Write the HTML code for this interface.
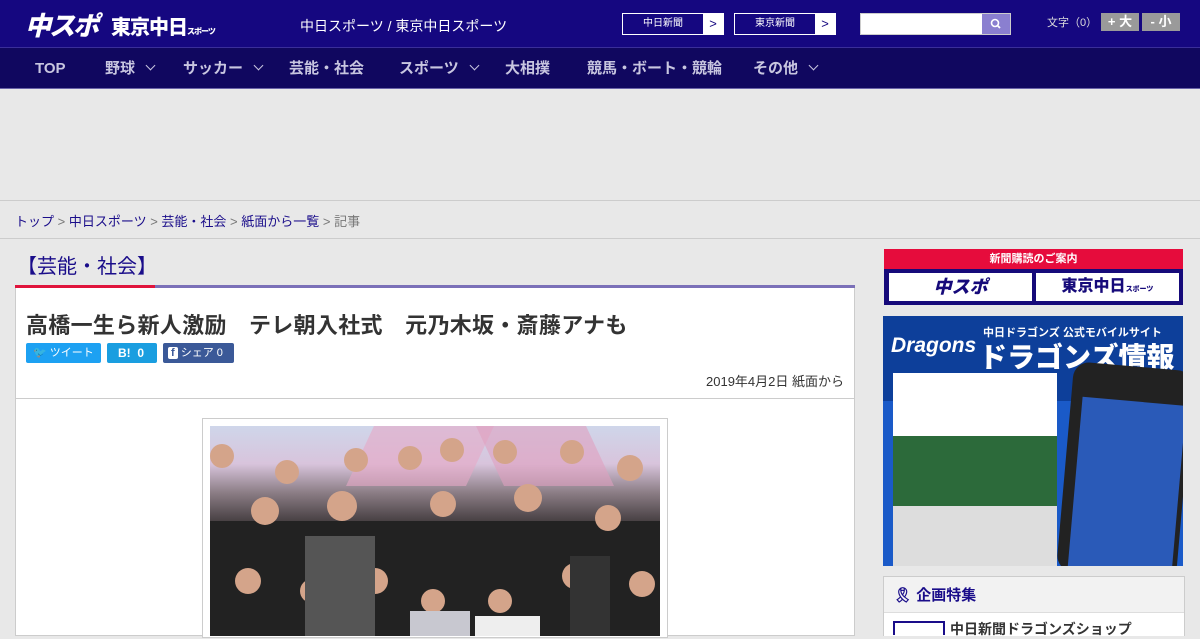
<!DOCTYPE html>
<html><head><meta charset="utf-8"><style>
*{margin:0;padding:0;box-sizing:border-box}
body{width:1200px;height:630px;overflow:hidden;background:#e8e8e8;font-family:"Liberation Sans","Noto Sans CJK JP",sans-serif;position:relative}
.a{position:absolute}
#hd{left:0;top:0;width:1200px;height:48px;background:#150780;border-bottom:1px solid #3a2e9a}
#nav{left:0;top:48px;width:1200px;height:41px;background:#10075f;border-bottom:1px solid #6a63a8}
.nv{top:58px;height:22px;line-height:22px;color:#c8c6e0;font-size:15px;font-weight:bold;white-space:nowrap}
.chev{display:inline-block;width:7px;height:7px;border-right:1.5px solid #c8c6e0;border-bottom:1.5px solid #c8c6e0;transform:rotate(45deg);margin-left:12px;vertical-align:4px}
.hb{top:13px;height:22px;border:1px solid #fff;background:#150780;color:#fff;font-size:10px;line-height:20px}
.hb span{position:absolute;right:0;top:0;width:20px;height:20px;background:#fff;color:#150780;text-align:center;font-size:13px}
</style></head><body>
<div id="hd" class="a"></div>
<div class="a" style="left:25px;top:6px;color:#fff;font-size:26px;font-weight:900;font-style:italic;letter-spacing:-2px">中スポ</div>
<div class="a" style="left:111px;top:11px;color:#fff;font-size:20px;font-weight:900;letter-spacing:-1px">東京中日<span style="font-size:8px">スポーツ</span></div>
<div class="a" style="left:300px;top:16px;color:#fff;font-size:14px">中日スポーツ / 東京中日スポーツ</div>
<div class="a hb" style="left:622px;width:102px;padding-left:20px">中日新聞<span>&gt;</span></div>
<div class="a hb" style="left:734px;width:102px;padding-left:20px">東京新聞<span>&gt;</span></div>
<div class="a" style="left:860px;top:13px;width:151px;height:22px;background:#fff;border:1px solid #ccc"></div>
<div class="a" style="left:982px;top:14px;width:28px;height:20px;background:#8a7fd0"><svg width="28" height="20"><circle cx="13" cy="9" r="3.5" stroke="#fff" stroke-width="1.6" fill="none"/><line x1="15.5" y1="11.5" x2="18" y2="14" stroke="#fff" stroke-width="1.8"/></svg></div>
<div class="a" style="left:1047px;top:14px;color:#ddd;font-size:11px">文字（0）</div>
<div class="a" style="left:1101px;top:13px;width:38px;height:18px;background:#9a9a9a;color:#fff;font-size:13px;font-weight:bold;text-align:center;line-height:18px">+ 大</div>
<div class="a" style="left:1142px;top:13px;width:38px;height:18px;background:#9a9a9a;color:#fff;font-size:13px;font-weight:bold;text-align:center;line-height:18px">- 小</div>
<div id="nav" class="a"></div>
<div class="a nv" style="left:35px">TOP</div>
<div class="a nv" style="left:105px">野球<i class="chev"></i></div>
<div class="a nv" style="left:183px">サッカー<i class="chev"></i></div>
<div class="a nv" style="left:289px">芸能・社会</div>
<div class="a nv" style="left:399px">スポーツ<i class="chev"></i></div>
<div class="a nv" style="left:505px">大相撲</div>
<div class="a nv" style="left:587px">競馬・ボート・競輪</div>
<div class="a nv" style="left:753px">その他<i class="chev"></i></div>
<div class="a" style="left:0;top:200px;width:1200px;height:39px;border-top:1px solid #ccc;border-bottom:1px solid #ccc"></div>
<div class="a" style="left:15px;top:211px;font-size:13px;color:#777"><span style="color:#1a0d8a">トップ</span> &gt; <span style="color:#1a0d8a">中日スポーツ</span> &gt; <span style="color:#1a0d8a">芸能・社会</span> &gt; <span style="color:#1a0d8a">紙面から一覧</span> &gt; 記事</div>
<div class="a" style="left:17px;top:250px;font-size:20px;color:#1a0d8a">【芸能・社会】</div>
<div class="a" style="left:15px;top:286px;width:840px;height:350px;background:#fff;border:1px solid #ccc;border-top:none"></div>
<div class="a" style="left:15px;top:285px;width:140px;height:3px;background:#e0143c"></div>
<div class="a" style="left:155px;top:285px;width:700px;height:3px;background:#7b70b8"></div>
<div class="a" style="left:26px;top:308px;font-size:22px;font-weight:bold;color:#333;letter-spacing:0.3px">高橋一生ら新人激励　テレ朝入社式　元乃木坂・斎藤アナも</div>
<div class="a" style="left:26px;top:343px;width:75px;height:20px;background:#1da1f2;border-radius:2px;color:#fff;font-size:11px;line-height:20px;padding-left:7px">🐦 ツイート</div>
<div class="a" style="left:107px;top:343px;width:50px;height:20px;background:#1a9ee0;border-radius:2px;color:#fff;font-size:12px;font-weight:bold;line-height:20px;padding-left:11px">B!&nbsp; 0</div>
<div class="a" style="left:163px;top:343px;width:71px;height:20px;background:#3b5998;border-radius:2px;color:#fff;font-size:11px;line-height:20px;padding-left:5px"><b style="background:#fff;color:#3b5998;padding:0 3px;border-radius:2px">f</b> シェア 0</div>
<div class="a" style="left:600px;top:371px;width:244px;text-align:right;font-size:13px;color:#333">2019年4月2日 紙面から</div>
<div class="a" style="left:16px;top:398px;width:838px;height:1px;background:#ccc"></div>
<div class="a" style="left:202px;top:418px;width:466px;height:220px;border:1px solid #ccc;background:#fff"></div>
<div class="a" style="left:210px;top:426px;width:450px;height:210px;overflow:hidden;background:linear-gradient(180deg,#cfd6ea 0%,#d8c4dc 18%,#8a7c84 32%,#3a3436 48%,#262426 100%)">
<div class="a" style="left:150px;top:0;width:120px;height:60px;background:#e6a8c6;opacity:.6;transform:skewX(-25deg)"></div>
<div class="a" style="left:280px;top:0;width:110px;height:60px;background:#e0a0c0;opacity:.6;transform:skewX(25deg)"></div>
<svg class="a" style="left:0;top:0" width="450" height="210">
<g fill="#222"><rect x="0" y="95" width="450" height="115"/></g>
<g fill="#d4a48a">
<circle cx="12" cy="30" r="12"/><circle cx="77" cy="46" r="12"/><circle cx="146" cy="34" r="12"/><circle cx="200" cy="32" r="12"/><circle cx="242" cy="24" r="12"/><circle cx="295" cy="26" r="12"/><circle cx="362" cy="26" r="12"/><circle cx="420" cy="42" r="13"/>
<circle cx="55" cy="85" r="14"/><circle cx="132" cy="80" r="15"/><circle cx="233" cy="78" r="13"/><circle cx="318" cy="72" r="14"/><circle cx="398" cy="92" r="13"/>
<circle cx="38" cy="155" r="13"/><circle cx="102" cy="165" r="12"/><circle cx="165" cy="155" r="13"/><circle cx="223" cy="175" r="12"/><circle cx="290" cy="175" r="12"/><circle cx="365" cy="150" r="13"/><circle cx="432" cy="158" r="13"/></g>
<rect x="95" y="110" width="70" height="100" fill="#555"/><rect x="360" y="130" width="40" height="80" fill="#333"/>
<rect x="200" y="185" width="60" height="30" fill="#c8c8d0"/><rect x="265" y="190" width="65" height="25" fill="#eee"/>
</svg></div>
<div class="a" style="left:884px;top:249px;width:299px;height:56px;background:#160a7a"></div>
<div class="a" style="left:884px;top:249px;width:299px;height:20px;background:#e60c3c;color:#fff;font-size:11px;font-weight:bold;text-align:center;line-height:20px">新聞購読のご案内</div>
<div class="a" style="left:889px;top:273px;width:143px;height:28px;background:#fff;color:#160a7a;font-size:18px;font-weight:900;font-style:italic;text-align:center;line-height:28px">中スポ</div>
<div class="a" style="left:1036px;top:273px;width:143px;height:28px;background:#fff;color:#160a7a;font-size:16px;font-weight:900;text-align:center;line-height:28px">東京中日<span style="font-size:7px">スポーツ</span></div>
<div class="a" style="left:883px;top:316px;width:300px;height:250px;background:#0d3f9a;overflow:hidden">
<div class="a" style="left:0;top:85px;width:300px;height:165px;background:#1a5ac8"></div>
<div class="a" style="left:8px;top:18px;color:#fff;font-size:21px;font-style:italic;font-weight:bold">Dragons</div>
<div class="a" style="left:100px;top:8px;color:#fff;font-size:11px;font-weight:bold;white-space:nowrap">中日ドラゴンズ 公式モバイルサイト</div>
<div class="a" style="left:96px;top:20px;color:#fff;font-size:28px;font-weight:900;white-space:nowrap">ドラゴンズ情報</div>
<div class="a" style="left:10px;top:57px;width:164px;height:180px;background:#fff"></div>
<div class="a" style="left:10px;top:120px;width:164px;height:70px;background:#2c6a3a"></div>
<div class="a" style="left:10px;top:190px;width:164px;height:60px;background:#ddd"></div>
<div class="a" style="left:182px;top:50px;width:120px;height:210px;background:#222;border-radius:16px;transform:rotate(5deg)"></div>
<div class="a" style="left:192px;top:85px;width:104px;height:170px;background:#2a5ab8;transform:rotate(5deg)"></div>
</div>
<div class="a" style="left:883px;top:576px;width:302px;height:60px;background:#f2f2f2;border:1px solid #ccc"></div>
<div class="a" style="left:884px;top:612px;width:300px;height:24px;background:#fff;border-top:1px solid #ddd"></div>
<div class="a" style="left:893px;top:584px;color:#1a0d8a;font-size:15px;font-weight:bold">🎗 企画特集</div>
<div class="a" style="left:893px;top:621px;width:52px;height:14px;border:2px solid #1a0d8a;border-bottom:none"></div>
<div class="a" style="left:950px;top:619px;font-size:14px;color:#333;font-weight:bold">中日新聞ドラゴンズショップ</div>
</body></html>
